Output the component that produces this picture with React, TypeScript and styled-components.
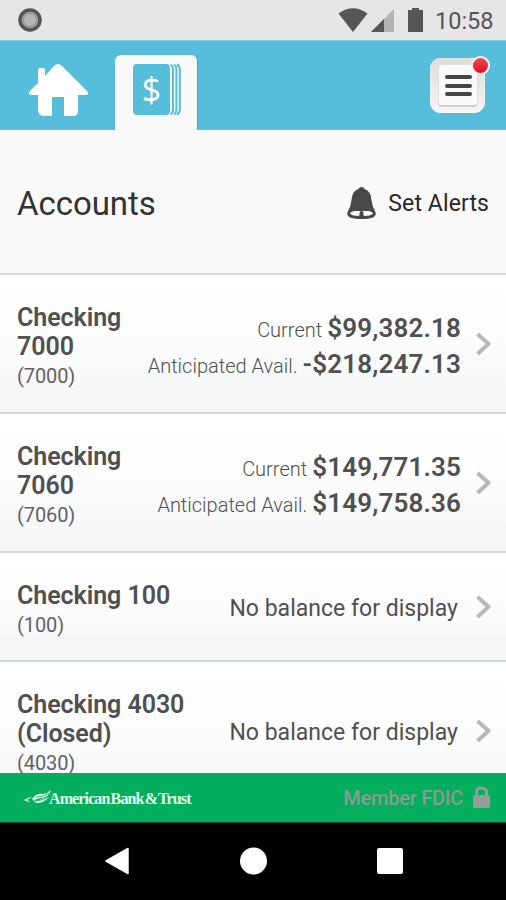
import React from "react";
import styled, { createGlobalStyle } from "styled-components";

const GlobalStyle = createGlobalStyle`
  * { box-sizing: border-box; }
  body { margin: 0; background: #000; }
  svg { display: block; flex: none; }
`;

const Screen = styled.div`
  width: 506px;
  height: 900px;
  display: flex;
  flex-direction: column;
  overflow: hidden;
  font-family: Roboto, sans-serif;
  color: #505050;
  background: #f9f9f9;
`;

const StatusBar = styled.div`
  height: 40px;
  flex: none;
  display: flex;
  align-items: center;
  padding: 0 13px 0 18px;
  background: #e6e6e6;
`;

const StatusIcons = styled.div`
  display: flex;
  margin-left: auto;
`;

const Clock = styled.span`
  width: 58px;
  margin-left: 10px;
  font-size: 23.5px;
  line-height: 40px;
  padding-top: 1px;
  white-space: nowrap;
  color: #555;
`;

const Header = styled.header`
  height: 90px;
  flex: none;
  display: flex;
  align-items: flex-end;
  padding: 0 21px 0 27px;
  background: #56bedb;
  border-top: 1px solid #83cce1;
`;

const HomeTab = styled.div`
  width: 88px;
  height: 75px;
  padding-top: 8px;
`;

const ActiveTab = styled.div`
  width: 83px;
  height: 75px;
  padding: 8px 0 0 18px;
  border-radius: 6px 6px 0 0;
  background: #f9f9f9;
  border-right: 1px solid #2fafd0;
`;

const MenuButton = styled.div`
  position: relative;
  width: 55px;
  height: 55px;
  margin: 0 0 17px auto;
  padding: 6px 7px 6px 8px;
  border-radius: 11px;
  background: linear-gradient(#dcdcdc, #f6f6f6);
  box-shadow: inset 0 0 2px #fff;
`;

const MenuFace = styled.div`
  height: 43px;
  border-radius: 4px;
  background: #fafafa;
  border: 1px solid #dedede;
  border-bottom: 2px solid #cfcfcf;
  display: flex;
  flex-direction: column;
  align-items: center;
  justify-content: center;
  gap: 4.5px;
  padding-top: 1px;
`;

const MenuBar = styled.span`
  width: 27px;
  height: 4px;
  border-radius: 2px;
  background: #454547;
`;

const Badge = styled.span`
  position: absolute;
  top: -2px;
  right: -5px;
  width: 19px;
  height: 19px;
  border-radius: 50%;
  background: linear-gradient(#ec4d54, #e30d21);
  border: 2px solid #fff3f1;
`;

const TitleBar = styled.section`
  height: 145px;
  flex: none;
  display: flex;
  align-items: center;
  padding: 4px 17px 0 17px;
  border-bottom: 2px solid #dadada;
`;

const Title = styled.h1`
  margin: 0;
  font-size: 33px;
  font-weight: 400;
  letter-spacing: -0.05px;
  color: #333;
`;

const AlertsLink = styled.div`
  display: flex;
  align-items: center;
  gap: 11px;
  margin-left: auto;
  font-size: 23px;
  line-height: 32px;
  letter-spacing: 0.1px;
  color: #282828;

  svg { margin-top: -2px; }
`;

const List = styled.main`
  flex: 1;
  min-height: 0;
  overflow: hidden;
`;

const Row = styled.article`
  display: flex;
  justify-content: space-between;
  height: ${(p: { $height: number }) => p.$height}px;
  padding: 28px 15px 0 17px;
  background: linear-gradient(#fff, #fdfdfd 45%, #f3f5f6);
  border-bottom: 2px solid #d6d9da;
`;

const Name = styled.h2`
  width: ${(p: { $wide?: boolean }) => (p.$wide ? 180 : 120)}px;
  margin: 0;
  font-size: 25px;
  font-weight: 600;
  line-height: 29px;
  letter-spacing: -0.05px;
`;

const AccountNo = styled.div`
  font-size: 20px;
  line-height: 30px;
  letter-spacing: -0.1px;
  color: #626262;
`;

const Details = styled.div`
  display: flex;
  align-items: center;
  gap: 14px;
  height: ${(p: { $height: number }) => p.$height}px;
  margin-top: -28px;
`;

const Balances = styled.div`
  text-align: right;
  padding-top: 2px;
`;

const Balance = styled.div`
  display: flex;
  align-items: baseline;
  justify-content: flex-end;
  gap: 5px;
  height: 36px;
  font-size: 20px;
  font-weight: 300;
  line-height: 36px;
  white-space: nowrap;
`;

const Amount = styled.strong`
  font-size: 26px;
  font-weight: 600;
  letter-spacing: 0.15px;
`;

const Empty = styled.div`
  padding: 2px 3px 0 0;
  font-size: 23px;
  letter-spacing: 0.02px;
  white-space: nowrap;
`;

const Footer = styled.footer`
  height: 49px;
  flex: none;
  display: flex;
  align-items: center;
  padding: 0 15px 0 23px;
  background: #03ae5c;
`;

const BankName = styled.span`
  margin: 2px 0 0 -5px;
  font-family: "Liberation Serif", serif;
  font-size: 16px;
  font-weight: 700;
  letter-spacing: -0.88px;
  word-spacing: -2px;
  white-space: nowrap;
  color: #e5fbed;
`;

const Member = styled.span`
  margin: 0 9px 0 auto;
  font-size: 20px;
  font-weight: 500;
  letter-spacing: -0.25px;
  white-space: nowrap;
  color: #8d9a8e;
`;

const NavBar = styled.nav`
  height: 78px;
  flex: none;
  display: flex;
  align-items: center;
  justify-content: space-between;
  padding: 0 103px 2px 104px;
  background: #000;
  border-top: 1px solid #03472a;
`;

const Chevron = () => (
  <svg width="16" height="25" viewBox="0 0 16 25">
    <path d="M2.500 2 13.500 11.800 2.500 22" fill="none" stroke="#b9b9b9" strokeWidth="4" strokeLinejoin="round" />
  </svg>
);

type Account = {
  name: string;
  number: string;
  height: number;
  wide?: boolean;
  balances?: [string, string][];
};

const accounts: Account[] = [
  { name: "Checking 7000", number: "(7000)", height: 139, balances: [["Current", "$99,382.18"], ["Anticipated Avail.", "-$218,247.13"]] },
  { name: "Checking 7060", number: "(7060)", height: 139, balances: [["Current", "$149,771.35"], ["Anticipated Avail.", "$149,758.36"]] },
  { name: "Checking 100", number: "(100)", height: 109, wide: true },
  { name: "Checking 4030 (Closed)", number: "(4030)", height: 139, wide: true },
];

export default function App() {
  return (
    <Screen>
      <GlobalStyle />
      <StatusBar>
        <svg width="24" height="24" viewBox="0 0 24 24">
          <circle cx="12" cy="12" r="10" fill="#a3a3a3" stroke="#555" strokeWidth="3.5" />
          <circle cx="12" cy="12" r="6.5" fill="#b5b5b5" stroke="#919191" />
        </svg>
        <StatusIcons>
          <svg width="88" height="26" viewBox="337 7 88 26">
            <path d="M338.5 13.5Q353 3 367.500 13.500L353 32Z" fill="#555" />
            <path d="M394 9V32H371Z" fill="#b3b3b3" />
            <path d="M384 19V32H371Z" fill="#555" />
            <path d="M408 10h4V8h7v2h4v22h-15Z" fill="#555" />
          </svg>
        </StatusIcons>
        <Clock>10:58</Clock>
      </StatusBar>
      <Header>
        <HomeTab>
          <svg width="62" height="54" viewBox="0 0 62 54">
            <path d="M31 1Q33 1 35 3L60 28Q63 32 58 32H51V48Q51 53 46 53H37V34H25V53H16Q11 52 11 46V32H4Q0 31 3 28L11 20V7Q11 5 13 5H16Q18 5 18 7V13L27 3Q29 1 31 1Z" fill="#fff" />
          </svg>
        </HomeTab>
        <ActiveTab>
          <svg width="49" height="54" viewBox="0 0 49 54">
            <rect y="1" width="37" height="51" rx="4" fill="#56bedb" />
            <path d="M37.500 1.500Q40 3 40 6V47Q40 50 37.500 51.500M41 1.500Q43.400 3 43.400 6V47Q43.400 50 41 51.500M44 1.500Q46.800 3 46.800 6V47Q46.800 50 44 51.500" fill="none" stroke="#56bedb" strokeWidth="2" />
            <text x="18.500" y="38.500" textAnchor="middle" fontFamily="Open Sans, sans-serif" fontSize="34" fill="#fff">$</text>
          </svg>
        </ActiveTab>
        <MenuButton>
          <MenuFace>
            <MenuBar />
            <MenuBar />
            <MenuBar />
          </MenuFace>
          <Badge />
        </MenuButton>
      </Header>
      <TitleBar>
        <Title>Accounts</Title>
        <AlertsLink>
          <svg width="31" height="34" viewBox="0 0 31 34">
            <path d="M15.500 1Q18 1 18.500 3Q24.500 4.500 25.500 14Q26 20 29 25Q33 33 15.500 33Q-2 33 2 25Q5 20 5.500 14Q6.500 4.500 12.500 3Q13 1 15.500 1Z" fill="#484848" />
            <path d="M4 27.500Q5 25.500 9 25H22Q26 25.500 27 27.500Q25 30 18 30Q17.500 27 15.500 27Q13.500 27 13 30Q6 30 4 27.500Z" fill="#f9f9f9" />
            <circle cx="15.500" cy="27" r="2" fill="#484848" />
          </svg>
          Set Alerts
        </AlertsLink>
      </TitleBar>
      <List>
        {accounts.map((a) => (
          <Row key={a.number} $height={a.height}>
            <div>
              <Name $wide={a.wide}>{a.name}</Name>
              <AccountNo>{a.number}</AccountNo>
            </div>
            <Details $height={a.height}>
              {a.balances ? (
                <Balances>
                  {a.balances.map(([label, value]) => (
                    <Balance key={label}>
                      <span>{label}</span>
                      <Amount>{value}</Amount>
                    </Balance>
                  ))}
                </Balances>
              ) : (
                <Empty>No balance for display</Empty>
              )}
              <Chevron />
            </Details>
          </Row>
        ))}
      </List>
      <Footer>
        <svg width="31" height="18" viewBox="0 0 31 18">
          <path d="M1 11Q5 8 9 8L4 11L8 13Q4 13 1 11ZM9 10Q13 4 20 5Q25 4 28 1Q26 8 19 9Q14 9 11 12ZM11 13Q17 10 26 8Q21 14 14 14Z" fill="#e0f8e9" />
          <path d="M13 8Q21 8 26 4M14 12Q21 11 25 8" fill="none" stroke="#03ae5c" strokeWidth="0.8" />
        </svg>
        <BankName>American Bank &amp; Trust</BankName>
        <Member>Member FDIC</Member>
        <svg width="19" height="24" viewBox="0 0 19 24">
          <path d="M4.500 11V6.500Q4.500 2 9.500 2Q14.500 2 14.500 6.500V11" fill="none" stroke="#999b9a" strokeWidth="3.2" />
          <rect x="1" y="9" width="17" height="13" rx="1.500" fill="#999b9a" />
        </svg>
      </Footer>
      <NavBar>
        <svg width="26" height="28" viewBox="0 0 26 28">
          <path d="M2 14 24 1.500V26.500Z" fill="#fff" stroke="#fff" strokeWidth="1.500" strokeLinejoin="round" />
        </svg>
        <svg width="28" height="28" viewBox="0 0 28 28">
          <circle cx="13.500" cy="14" r="13.500" fill="#fff" />
        </svg>
        <svg width="26" height="26" viewBox="0 0 26 26">
          <rect width="26" height="26" rx="2" fill="#fff" />
        </svg>
      </NavBar>
    </Screen>
  );
}
